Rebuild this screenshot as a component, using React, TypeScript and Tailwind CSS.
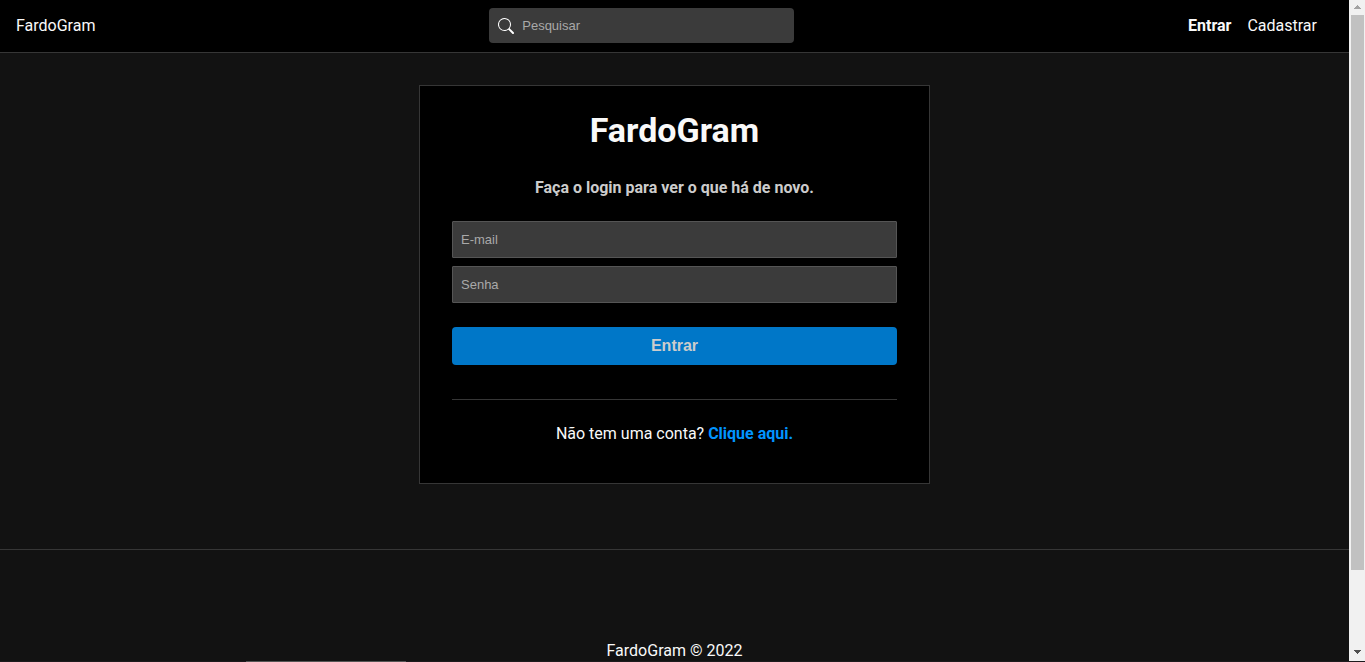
import React from "react";
import { BsSearch } from "react-icons/bs";

function Header() {
  return (
    <header className="flex h-[53px] shrink-0 items-start justify-between border-b border-[#363636] bg-black pt-2 pr-8 pl-4">
      <h2 className="leading-[35px]">
        <a href="#home">FardoGram</a>
      </h2>
      <form
        role="search"
        className="flex h-[35px] w-[305px] items-center gap-2 rounded bg-[#3b3b3b] px-2"
      >
        <BsSearch className="ml-px size-4 shrink-0 text-white" aria-hidden="true" />
        <input
          type="text"
          aria-label="Pesquisar"
          placeholder="Pesquisar"
          className="min-w-0 flex-1 bg-transparent font-['Liberation_Sans',sans-serif] text-[13px] text-white outline-none placeholder:text-[#a9a9a9]"
        />
      </form>
      <nav className="flex gap-4 leading-[35px]">
        <a href="#login" className="font-bold">
          Entrar
        </a>
        <a href="#register">Cadastrar</a>
      </nav>
    </header>
  );
}

function Field({ label, type }: { label: string; type: string }) {
  return (
    <input
      type={type}
      aria-label={label}
      placeholder={label}
      className="h-[37px] w-full rounded-[1px] border border-[#555] bg-[#3b3b3b] px-2 font-['Liberation_Sans',sans-serif] text-[13px] text-white outline-none placeholder:text-[#a9a9a9]"
    />
  );
}

function Login() {
  return (
    <section className="mx-auto w-full max-w-[511px] border border-[#363636] bg-black px-8 pt-6 pb-[39px] text-center">
      <h1 className="text-[34px] leading-10 font-bold">FardoGram</h1>
      <p className="mt-7 leading-5 font-bold text-[#ccc]">
        Faça o login para ver o que há de novo.
      </p>
      <form className="mt-[23px] flex flex-col gap-2">
        <Field label="E-mail" type="email" />
        <Field label="Senha" type="password" />
        <button
          type="button"
          className="mt-4 h-[38px] rounded bg-[#0077c8] font-['Liberation_Sans',sans-serif] font-bold text-[#ccc]"
        >
          Entrar
        </button>
      </form>
      <p className="mt-[34px] border-t border-[#363636] pt-6 leading-5">
        Não tem uma conta?{" "}
        <a href="#register" className="font-bold text-[#0094ff]">
          Clique aqui.
        </a>
      </p>
    </section>
  );
}

function Scrollbar() {
  return (
    <div aria-hidden="true" className="flex w-4 shrink-0 flex-col items-center bg-[#f1f1f1]">
      <svg viewBox="0 0 16 15" className="h-[15px] w-4 shrink-0" shapeRendering="crispEdges">
        <path d="M8 5h1v1h1v1h1v1h1v1H5V8h1V7h1V6h1z" fill="#a3a3a3" />
      </svg>
      <div className="min-h-0 w-[13px] grow-[555] basis-0 bg-[#c1c1c1]" />
      <div className="grow-[75] basis-0" />
      <svg viewBox="0 0 16 16" className="size-4 shrink-0" shapeRendering="crispEdges">
        <path d="M5 5h7v1h-1v1h-1v1H9v1H8V8H7V7H6V6H5z" fill="#505050" />
      </svg>
    </div>
  );
}

export default function App() {
  return (
    <div className="flex h-screen flex-col bg-[#121212] font-[Roboto,sans-serif] text-base text-[#f9f9f9]">
      <div className="flex min-h-0 flex-1">
        <div className="flex min-w-0 flex-1 flex-col overflow-hidden">
          <Header />
          <main className="shrink-0 px-4 pt-8 pb-[65px]">
            <Login />
          </main>
          <footer className="shrink-0 border-t border-[#363636] pt-[91px] text-center leading-5">
            <p>FardoGram © 2022</p>
          </footer>
        </div>
        <Scrollbar />
      </div>
      <div aria-hidden="true" className="flex h-px shrink-0 bg-[#1d1a1d]">
        <div className="ml-[18%] w-40 bg-[#555]" />
      </div>
    </div>
  );
}
